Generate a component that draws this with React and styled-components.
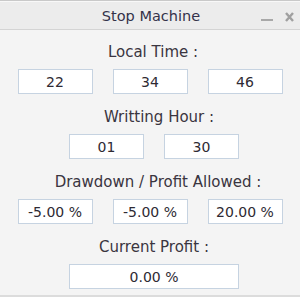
import styled, { createGlobalStyle } from "styled-components";

const GlobalStyle = createGlobalStyle`
  html, body {
    margin: 0;
    padding: 0;
    background: #ffffff;
  }
  * {
    box-sizing: border-box;
  }
`;

const Window = styled.div`
  width: 300px;
  height: 297px;
  display: flex;
  flex-direction: column;
  background-color: #f4f4f4;
  border-top: 1px solid #c9c9c9;
  border-bottom: 2px solid #dcdcdc;
  font-family: "DejaVu Sans", Tahoma, sans-serif;
  color: #3a3540;
`;

const TitleBar = styled.div`
  height: 29px;
  display: flex;
  align-items: center;
  justify-content: center;
  position: relative;
  background-color: #ececec;
  border-top: 1px solid #f8f8f8;
  border-bottom: 1px solid #d4d4d4;

  & h1 {
    margin: 0 0 0 2px;
    font-size: 14.5px;
    font-weight: 400;
    color: #34324a;
  }
`;

const Controls = styled.div`
  position: absolute;
  right: 6px;
  top: 10px;
  display: flex;
  align-items: flex-end;
  gap: 12px;
`;

const Content = styled.div`
  display: flex;
  flex-direction: column;
  gap: 14px;
  padding-top: 13px;
`;

const Section = styled.div`
  display: flex;
  flex-direction: column;
  align-items: center;
  gap: 8px;
`;

const Label = styled.div`
  height: 18px;
  line-height: 18px;
  font-size: 15px;
  margin-left: ${(props) => props.$offset * 2}px;
`;

const Row = styled.div`
  display: flex;
  justify-content: center;
  gap: 20px;
  margin-left: ${(props) => (props.$shift ? 8 : 0)}px;
`;

const Field = styled.div`
  width: ${(props) => props.$width || 75}px;
  height: 25px;
  display: flex;
  align-items: center;
  justify-content: center;
  background-color: #ffffff;
  border: 1px solid #c6d3e1;
  font-size: 14px;
  color: #2e2a33;
`;

const sections = [
  { label: "Local Time :", offset: 3, values: ["22", "34", "46"] },
  { label: "Writting Hour :", offset: 9, values: ["01", "30"], shift: true },
  { label: "Drawdown / Profit Allowed :", offset: 8, values: ["-5.00 %", "-5.00 %", "20.00 %"] },
];

export default function App() {
  return (
    <>
      <GlobalStyle />
      <Window>
        <TitleBar>
          <h1>Stop Machine</h1>
          <Controls>
            <svg width="12" height="4" viewBox="0 0 12 4">
              <rect x="0" y="1" width="12" height="2" fill="#a8a8a8" />
            </svg>
            <svg width="9" height="10" viewBox="0 0 9 10">
              <path d="M1 1 L8 9 M8 1 L1 9" stroke="#a0a0a0" strokeWidth="2.4" />
            </svg>
          </Controls>
        </TitleBar>
        <Content>
          {sections.map((s) => (
            <Section key={s.label}>
              <Label $offset={s.offset}>{s.label}</Label>
              <Row $shift={s.shift}>
                {s.values.map((v, i) => (
                  <Field key={i}>{v}</Field>
                ))}
              </Row>
            </Section>
          ))}
          <Section>
            <Label $offset={4}>Current Profit :</Label>
            <Row $shift>
              <Field $width={170}>0.00 %</Field>
            </Row>
          </Section>
        </Content>
      </Window>
    </>
  );
}
